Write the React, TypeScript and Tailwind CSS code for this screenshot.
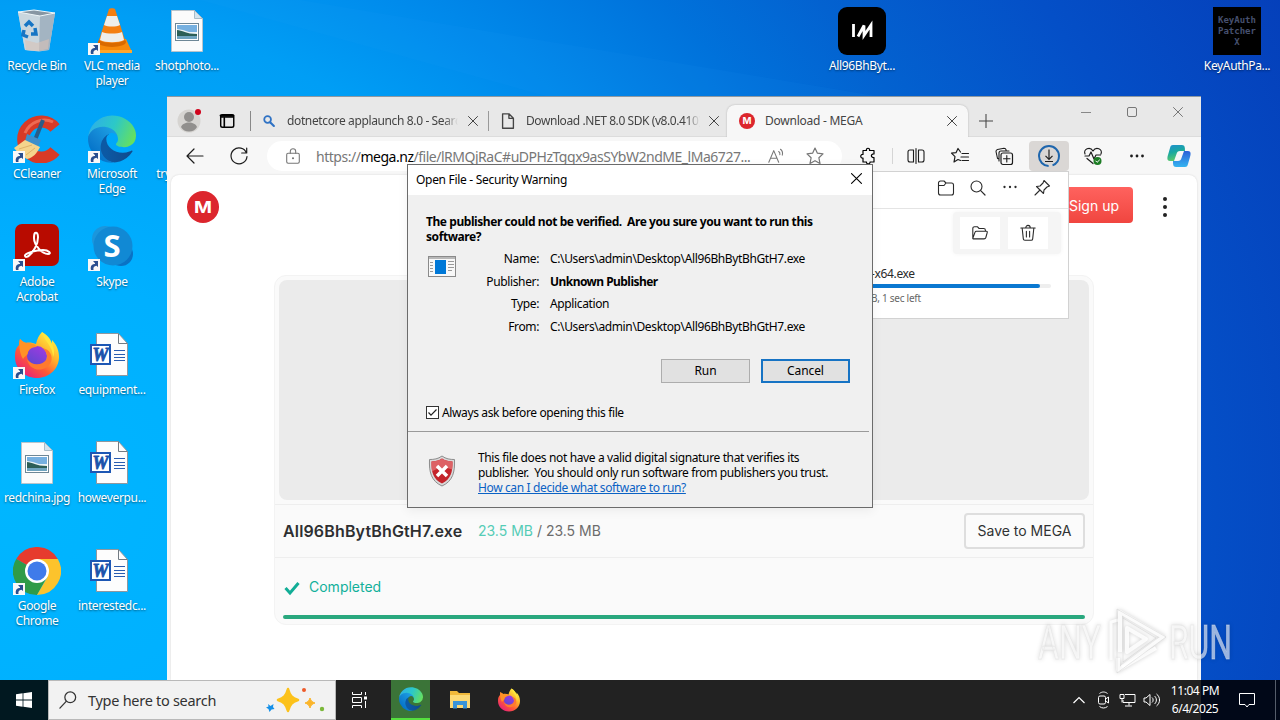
import type { ReactNode } from "react";

function ShortcutArrow() {
  return (
    <svg className="absolute left-0 bottom-0 w-3 h-3" viewBox="0 0 12 12">
      <rect width="12" height="12" fill="#f8f8f8" />
      <path d="M3 11c-1-4 1-6 4-6V2.500H10V8L8.500 6.800C6 7 5 8.500 5.500 11z" fill="#2a4f8f" />
      <path d="M5 2h5v5.500z" fill="#2a4f8f" />
    </svg>
  );
}

function EdgeLogo({ className, id }: { className: string; id: string }) {
  return (
    <svg className={className} viewBox="0 0 256 256">
      <defs>
        <linearGradient id={`${id}a`} x1="0.2" y1="0.5" x2="1" y2="0.5">
          <stop offset="0" stopColor="#0c59a4" />
          <stop offset="1" stopColor="#114a8b" />
        </linearGradient>
        <linearGradient id={`${id}b`} x1="0.8" y1="0.2" x2="0.2" y2="0.9">
          <stop offset="0" stopColor="#1b9de2" />
          <stop offset="0.6" stopColor="#1080d0" />
          <stop offset="1" stopColor="#0070c8" />
        </linearGradient>
        <linearGradient id={`${id}c`} x1="0" y1="0.3" x2="1" y2="0.6">
          <stop offset="0" stopColor="#2eaee8" />
          <stop offset="0.5" stopColor="#2cc8c8" />
          <stop offset="1" stopColor="#66e05e" />
        </linearGradient>
      </defs>
      <path
        fill={`url(#${id}a)`}
        d="M231 190.500c-3.400 1.800-6.900 3.300-10.500 4.700a101 101 0 0 1-35.500 6.400c-46.800 0-87.500-32.200-87.500-73.500a31.300 31.300 0 0 1 16.300-27.300c-42.300 1.800-53.200 45.900-53.200 71.700 0 73.200 67.400 80.600 82 80.600 7.800 0 19.600-2.300 26.700-4.500l1.300-.5a128 128 0 0 0 66.600-52.800 4 4 0 0 0-5.200-5.600z"
      />
      <path
        fill={`url(#${id}b)`}
        d="M105.700 241.400a79 79 0 0 1-22.700-21.300 80.700 80.700 0 0 1 29.500-120c3.200-1.500 8.500-4.100 15.600-4a32.400 32.400 0 0 1 25.700 13 31.900 31.900 0 0 1 6.300 18.700c0-.2 24.500-79.600-80-79.600-43.900 0-80 41.700-80 78.200 0 19.300 4.500 38.500 12.600 55.200a128 128 0 0 0 156.400 67 75.500 75.500 0 0 1-62.800-7.200z"
      />
      <path
        fill={`url(#${id}c)`}
        d="M152.300 149.900c-.8 1-3.300 2.500-3.300 5.700 0 2.600 1.700 5.100 4.700 7.200 14.400 10 41.500 8.700 41.600 8.700a59.600 59.600 0 0 0 30.300-8.300 61.400 61.400 0 0 0 30.400-52.900c.3-22.400-8-37.300-11.300-43.900C223.500 25.400 177.800 2 128 2A128 128 0 0 0 0 128.200c.5-36.500 36.800-66 80-66 3.500 0 23.500.3 42 10.100 16.300 8.600 24.900 18.900 30.800 29.200 6.200 10.700 7.300 24.100 7.300 29.500s-2.700 13.300-7.800 18.900z"
      />
    </svg>
  );
}

function FirefoxLogo({ className, id }: { className: string; id: string }) {
  return (
    <svg className={className} viewBox="0 0 48 48">
      <defs>
        <linearGradient id={`${id}a`} x1="0.85" y1="0.1" x2="0.2" y2="0.95">
          <stop offset="0" stopColor="#fff044" />
          <stop offset="0.35" stopColor="#ffb02a" />
          <stop offset="0.65" stopColor="#ff5a36" />
          <stop offset="1" stopColor="#e8207a" />
        </linearGradient>
        <linearGradient id={`${id}b`} x1="0.8" y1="0" x2="0.2" y2="1">
          <stop offset="0" stopColor="#a03ae0" />
          <stop offset="1" stopColor="#5b48d0" />
        </linearGradient>
      </defs>
      <path
        fill={`url(#${id}a)`}
        d="M29 1c5 3 8 7 9 12 1-1 1-2 1-4 5 5 7 11 7 17 0 12-10 21-22 21S2 38 2 26c0-6 1-9 4-12 0-2 0-4 1-6 2 2 4 3 6 4 3-1 7 0 10 1 1-5 3-9 6-12z"
      />
      <circle cx="24" cy="25" r="10" fill={`url(#${id}b)`} />
      <path d="M7 8c2 3 5 4 8 4 3 0 7 1 9 4-3 0-8 1-9 5 0 3-3 4-5 7-4-7-4-14-3-20z" fill="#ff9226" />
      <path d="M14 28c5 7 15 7 20 0 1-5-2-9-5-11 8 1 11 8 9 14-5 11-22 10-24-3z" fill="#ff7a2e" />
      <path d="M29 1c2 9 11 14 11 25 2-4 1-9-1-13-1-5-5-9-10-12z" fill="#ffe63c" />
    </svg>
  );
}

function RecycleBin() {
  return (
    <svg className="w-12 h-12" viewBox="0 0 48 48">
      <path d="M5 5l37 1-6 37-10 1.500L12 43z" fill="#c3d2dc" />
      <path d="M5 5l22 4-1 35-14-1z" fill="#c9d6de" />
      <path d="M27 9l15-3-6 37-10 1z" fill="#a3b4c2" />
      <path d="M5 5l16-2 21 3-15 3z" fill="#8796a3" stroke="#eef5f8" strokeWidth="1" />
      <path d="M12 33l12 3 12-4-1 10-10 2-12-1z" fill="#d9c2b5" opacity=".6" />
      <path d="M12 19l4-4 4 4M22 21l1 6-5 0M11 23l-1 5 5 2" fill="none" stroke="#1675c4" strokeWidth="3.500" />
    </svg>
  );
}

function VlcIcon() {
  return (
    <svg className="w-12 h-12" viewBox="0 0 48 48">
      <path d="M12 32h26l6 13H4z" fill="#f78a0c" />
      <path d="M4 43h40v3H4z" fill="#ffa62a" />
      <ellipse cx="24" cy="35" rx="14" ry="5" fill="#d96a00" />
      <path d="M21 2c1-1 5-1 6 0l10 31c-4 4-22 4-26 0z" fill="#f47f10" />
      <path d="M19 9h10l3 9c-4 2-12 2-16 0z" fill="#eeeeea" />
      <path d="M14 25c5 2 15 2 20 0l2 8c-5 3-19 3-24 0z" fill="#eeeeea" />
    </svg>
  );
}

function CCleanerIcon() {
  return (
    <svg className="w-12 h-12" viewBox="0 0 48 48">
      <path d="M42 13A18 18 0 1 0 42 36" fill="none" stroke="#d83a26" strokeWidth="12" />
      <path d="M40 7A21 21 0 0 0 12 18" fill="none" stroke="#ee6a52" strokeWidth="3" />
      <path d="M30 5l-8 20" stroke="#2b5c87" strokeWidth="4" />
      <path d="M14 19l14 6-3 7-13-6z" fill="#3d8fcb" />
      <path d="M12 25l15 7c-3 6-7 11-13 12C9 41 5 38 1 33z" fill="#f5d48c" />
      <path d="M6 34l13-4M13 40l9-7" stroke="#dfb269" />
    </svg>
  );
}

function AcrobatIcon() {
  return (
    <svg className="w-12 h-12" viewBox="0 0 48 48">
      <rect x="2" y="1" width="44" height="42" rx="7" fill="#b80b00" />
      <path
        d="M22 10c4-2 4 8 0 15-3 6-9 11-10 8s12-6 18-6 9 4 5 4c-6 0-14-9-14-16 0-2 0-4 1-5z"
        fill="none"
        stroke="#fff"
        strokeWidth="2"
      />
    </svg>
  );
}

function SkypeIcon() {
  return (
    <svg className="w-12 h-12" viewBox="0 0 48 48">
      <circle cx="17" cy="16" r="13" fill="#1b96dc" />
      <circle cx="33" cy="31" r="12" fill="#0a72c4" />
      <circle cx="25" cy="23" r="19.500" fill="#1189d4" />
      <text x="24" y="34" textAnchor="middle" fontFamily="Open Sans, sans-serif" fontWeight="700" fontSize="31" fill="#fff">
        S
      </text>
    </svg>
  );
}

function ChromeIcon() {
  return (
    <svg className="w-12 h-12" viewBox="0 0 48 48">
      <path d="M24 24L3.200 12A24 24 0 0 1 44.800 12z" fill="#e63b2e" />
      <path d="M3.200 12A24 24 0 0 0 24 48l10-18-10-6z" fill="#2f9b48" />
      <path d="M44.800 12A24 24 0 0 1 24 48l10.400-18L24 12z" fill="#fcc32c" />
      <circle cx="24" cy="24" r="12" fill="#fff" />
      <circle cx="24" cy="24" r="9.500" fill="#3f7bea" />
    </svg>
  );
}

function PhotoFile() {
  return (
    <svg className="w-12 h-12" viewBox="0 0 48 48">
      <path d="M8.500 3.500h23l8 8v33h-31z" fill="#fbfbfb" stroke="#b8c4cc" />
      <path d="M31.500 3.500v8h8z" fill="#d3e4ee" stroke="#a8bcc8" />
      <rect x="12.500" y="16.500" width="23" height="17" fill="#fff" stroke="#6e8796" />
      <rect x="14" y="18" width="20" height="7" fill="#76b0e0" />
      <path d="M14 22l6 1 6 2 8 0v3H14z" fill="#eaf3f6" />
      <path d="M14 23c5 0 9 4 20 4v3H14z" fill="#2c5f57" />
      <rect x="14" y="29" width="20" height="3" fill="#6fa4bf" />
    </svg>
  );
}

function WordFile() {
  return (
    <svg className="w-12 h-12" viewBox="0 0 48 48">
      <path d="M8.500 2.500h22l9 10v32h-31z" fill="#fdfdfd" stroke="#8f979e" />
      <path d="M30.500 2.500v10h9" fill="none" stroke="#737b82" />
      <path d="M26 19.500h11M26 23.500h11M26 26.500h11M26 29.500h11" stroke="#2a5db0" />
      <rect x="3" y="14" width="19" height="19" fill="#fff" stroke="#1d57b4" strokeWidth="2" />
      <text x="12.500" y="30" textAnchor="middle" fontFamily="Liberation Serif, serif" fontStyle="italic" fontWeight="700" fontSize="18" fill="#1b53ab" stroke="#1b53ab" strokeWidth=".8">
        W
      </text>
    </svg>
  );
}

function DesktopIcon({ label, shortcut, children }: { label: string; shortcut?: boolean; children: ReactNode }) {
  return (
    <div className="h-[108px] w-[74px] flex flex-col items-center pt-[7px]">
      <div className="relative w-12 h-12 shrink-0">
        {children}
        {shortcut && <ShortcutArrow />}
      </div>
      <span className="mt-[3px] text-center text-[12px] leading-[15px] tracking-[-0.350px] text-white whitespace-pre [text-shadow:0_1px_2px_rgba(0,0,0,.5)]">
        {label}
      </span>
    </div>
  );
}

function MegaLogo({ className }: { className: string }) {
  return (
    <svg className={className} viewBox="0 0 32 32">
      <circle cx="16" cy="16" r="16" fill="#dc262d" />
      <text x="16" y="22" textAnchor="middle" textLength="18" lengthAdjust="spacingAndGlyphs" fontFamily="Inter, sans-serif" fontWeight="700" fontSize="16.500" fill="#fff">
        M
      </text>
    </svg>
  );
}

function Icon({ children, className = "w-5 h-5" }: { children: ReactNode; className?: string }) {
  return (
    <svg
      className={`shrink-0 ${className}`}
      viewBox="0 0 20 20"
      fill="none"
      stroke="currentColor"
      strokeWidth="1.200"
      strokeLinecap="round"
      strokeLinejoin="round"
    >
      {children}
    </svg>
  );
}

function CloseIcon({ className }: { className: string }) {
  return (
    <Icon className={className}>
      <path d="M1 1l18 18M19 1L1 19" strokeWidth="2" />
    </Icon>
  );
}

function TabStrip() {
  return (
    <div className="h-10 flex bg-[#e8e8e8] text-[#444] border-b border-[#dcdcdc]">
      <div className="flex items-center h-full pt-2 pl-[10px]">
        <div className="relative w-6 h-6">
          <svg className="w-6 h-6" viewBox="0 0 24 24">
            <circle cx="12" cy="12" r="11.500" fill="#d6d4d1" />
            <circle cx="12" cy="8" r="5" fill="#918f8d" />
            <path d="M4 18c2-6 14-6 16 0-3 6-13 6-16 0z" fill="#918f8d" />
          </svg>
          <span className="absolute top-0 right-0 w-[6px] h-[6px] rounded-full bg-[#d0021b]" />
        </div>
        <Icon className="w-[18px] h-[18px] ml-[17px] text-black">
          <rect x="3" y="3" width="14.500" height="14" rx="2" strokeWidth="1.600" />
          <path d="M3.500 5.500h13.500M7 7v10" strokeWidth="1.800" />
          <path d="M3 4h14" strokeWidth="2.500" />
        </Icon>
        <span className="w-px h-5 bg-[#888] ml-[14px]" />
      </div>

      <div className="flex items-center w-[238px] pt-2 pl-[11px]">
        <Icon className="w-[14px] h-[14px] text-[#2f72c4]">
          <circle cx="8" cy="8" r="4.800" strokeWidth="2.500" />
          <path d="M12 12l5 5" strokeWidth="3" />
        </Icon>
        <span className="ml-[11px] w-[174px] overflow-hidden whitespace-nowrap text-[12px] tracking-[-0.370px] [mask-image:linear-gradient(to_right,#000_92%,transparent)]">
          dotnetcore applaunch 8.0 - Search
        </span>
        <CloseIcon className="w-[10px] h-[10px] ml-[10px]" />
        <span className="w-px h-5 bg-[#999] ml-[10px]" />
      </div>

      <div className="flex items-center w-[238px] pt-2 pl-[10px]">
        <Icon className="w-[18px] h-[18px]">
          <path d="M4 2h7l5 5v11H4zM11 2v5h5" strokeWidth="1.500" />
        </Icon>
        <span className="ml-[9px] w-[174px] overflow-hidden whitespace-nowrap text-[12px] tracking-[-0.420px] [mask-image:linear-gradient(to_right,#000_92%,transparent)]">
          Download .NET 8.0 SDK (v8.0.410)
        </span>
        <CloseIcon className="w-[10px] h-[10px] ml-[9px]" />
      </div>

      <div className="mt-2 h-8 w-[241px] shrink-0 flex items-center rounded-t-lg bg-[#f7f7f7] shadow-[0_0_2px_rgba(0,0,0,.25)] pl-[12px]">
        <MegaLogo className="w-4 h-4" />
        <span className="ml-[10px] w-[182px] text-[12px] tracking-[-0.250px]">Download - MEGA</span>
        <CloseIcon className="w-[10px] h-[10px]" />
      </div>
      <Icon className="w-[14px] h-[14px] mt-[17px] ml-[11px]">
        <path d="M10 0v20M0 10h20" strokeWidth="1.500" />
      </Icon>

      <div className="ml-auto mr-[18px] flex items-center gap-[36px] h-[30px] text-[#777]">
        <span className="w-[10px] h-px bg-[#888]" />
        <span className="w-[10px] h-[10px] border border-[#777] rounded-[2px]" />
        <CloseIcon className="w-[10px] h-[10px]" />
      </div>
    </div>
  );
}

function Toolbar() {
  const cell = "w-[44.200px] h-[30px] flex items-center justify-center";
  return (
    <div className="h-[38px] flex items-center bg-[#f7f7f7] text-[#1c1c1c] pl-[18px]">
      <Icon>
        <path d="M18 10H2.500M9 3L2 10l7 7" />
      </Icon>
      <Icon className="w-5 h-5 ml-[24px]">
        <path d="M17.500 7A8 8 0 1 0 18 10.500M17.700 2v5h-5" />
      </Icon>
      <div className="ml-[18px] w-[575px] h-[30px] shrink-0 flex items-center rounded-full bg-white text-[#777] pl-[17px]">
        <Icon className="w-[18px] h-[18px]">
          <rect x="3" y="7" width="14" height="11" rx="1.500" />
          <path d="M7 7V5c0-4 6-4 6 0v2" />
          <circle cx="10" cy="12.500" r=".6" fill="currentColor" />
        </Icon>
        <span className="ml-[14px] w-[445px] whitespace-nowrap text-[14px] tracking-[-0.480px]">
          https://<span className="text-black">mega.nz</span>/file/lRMQjRaC#uDPHzTgqx9asSYbW2ndME_lMa6727...
        </span>
        <Icon className="w-[18px] h-[18px] ml-[6px]">
          <path d="M2 17L7.500 4L13 17M4 12.500h7M13 5c1.500 1 1.500 2.500 1.300 3.500M15 2.500c2.500 2 2.500 4.500 2 6.500" />
        </Icon>
        <Icon className="w-5 h-5 ml-[20px]">
          <path d="M10 2l2.400 5.200 5.600.7-4.100 3.900 1.100 5.700-5-2.800-5 2.800 1.100-5.700L2 7.900l5.600-.7z" />
        </Icon>
      </div>
      <Icon className="w-5 h-5 ml-[16px] text-black">
        <path d="M5 4.500h3.500c-1-3 4-3 3 0H16V8c-3.500-.5-3.500 4 0 3.500V16h-4c.5 2.500-4 2.500-3.500 0H5v-4c-3 .5-3-4 0-3.500z" />
      </Icon>
      <span className="w-px h-4 bg-[#d5d5d5] ml-[14px] mr-[1px]" />
      <div className={cell}>
        <Icon>
          <path d="M7.500 4H4a2 2 0 0 0-2 2v8a2 2 0 0 0 2 2h3.500zM12.500 4H16a2 2 0 0 1 2 2v8a2 2 0 0 1-2 2h-3.500zM10 2.500v15" strokeWidth="1.100" />
        </Icon>
      </div>
      <div className={cell}>
        <Icon>
          <path d="M10.500 6L8 2.500 6 6.700l-4.500.5L5 10.700 4 16l4-2.500 2.500 1M12 7.500h6.500M11 11h7.500M12 14.500h6.500" />
        </Icon>
      </div>
      <div className={cell}>
        <Icon>
          <rect x="7" y="7" width="11.500" height="11.500" rx="2" />
          <path d="M12.800 9.500v6.500M9.500 12.800H16M5 13L3.500 12.500 2 5.500a2 2 0 0 1 1.500-2L10 2.200a2 2 0 0 1 2 1.500l.2 1.300M5 15V7a2 2 0 0 1 2-2h8" strokeWidth="1.100" />
        </Icon>
      </div>
      <div className="w-10 mx-[2px] h-[30px] flex items-center justify-center rounded bg-[#dad7d5]">
        <svg className="w-6 h-6" viewBox="0 0 24 24" fill="none">
          <circle cx="12" cy="12" r="10" stroke="#1f66ad" strokeWidth="2" strokeDasharray="59 4" strokeDashoffset="-16" />
          <path d="M12 5.500v9.500M8.500 11.800L12 15.300l3.500-3.500M8 17.500h8" stroke="#222" strokeWidth="1.200" />
        </svg>
      </div>
      <div className={cell}>
        <Icon>
          <path d="M2 8c-2-5 5-8 8-3 3-5 10-2 8 3M2 10h4l2-4 3 7 2-4h4.500M4 12.500l6 5" />
          <circle cx="14.500" cy="15" r="4" fill="#1c7c24" stroke="none" />
          <path d="M12.800 15l1.300 1.300L16.500 14" stroke="#fff" strokeWidth="1" />
        </Icon>
      </div>
      <div className={cell}>
        <Icon>
          <path d="M4.500 10h.01M10 10h.01M15.500 10h.01" strokeWidth="2.800" />
        </Icon>
      </div>
      <svg className="w-6 h-6 ml-[8px] shrink-0" viewBox="0 0 24 24">
        <defs>
          <linearGradient id="cpl" x1="0" y1="0" x2="0.300" y2="1">
            <stop offset="0" stopColor="#1f8fd0" />
            <stop offset=".5" stopColor="#1aa8a0" />
            <stop offset="1" stopColor="#5cc96a" />
          </linearGradient>
          <linearGradient id="cpr" x1="0.500" y1="0" x2="0.500" y2="1">
            <stop offset="0" stopColor="#2b60d8" />
            <stop offset="1" stopColor="#35b4f0" />
          </linearGradient>
        </defs>
        <path d="M6 1h9c3 0 3 3 3 6h-5c-2 0-3 1-3.500 3L7 17H3c-3 0-3-3-2-6l2-7c.5-2 1-3 3-3z" fill="url(#cpl)" />
        <path d="M18 23H9c-3 0-3-3-3-6h5c2 0 3-1 3.500-3L17 7h4c3 0 3 3 2 6l-2 7c-.5 2-1 3-3 3z" fill="url(#cpr)" />
      </svg>
    </div>
  );
}

function MegaPage() {
  return (
    <div className="mx-1 flex-1 rounded-t-lg bg-white shadow-[0_0_2px_rgba(0,0,0,.15)] font-[Inter,sans-serif]">
      <header className="flex items-center pt-3 pl-4 h-[52px]">
        <MegaLogo className="w-8 h-8" />
        <div className="ml-auto w-[96px] h-9 mt-[-4px] rounded flex items-center justify-end pr-[14px] bg-gradient-to-b from-[#ff625e] to-[#f0453f] text-white text-[14px]">
          Sign up
        </div>
        <div className="flex flex-col gap-[4px] ml-[30px] mr-[30px]">
          <span className="w-1 h-1 rounded-full bg-[#222]" />
          <span className="w-1 h-1 rounded-full bg-[#222]" />
          <span className="w-1 h-1 rounded-full bg-[#222]" />
        </div>
      </header>

      <section className="mt-[48px] ml-[103px] w-[820px] h-[350px] rounded-xl border border-[#f3f3f3] bg-[#fafafa]">
        <div className="ml-1 mr-1 mt-1 h-[220px] rounded-lg bg-[#ebebeb]" />
        <div className="mt-1 h-[54px] flex items-center border-y border-[#eeeeee] pl-2 pr-[8px] pb-px">
          <span className="w-[195px] text-[16px] tracking-[0.150px] font-semibold text-[#2e2f31]">All96BhBytBhGtH7.exe</span>
          <span className="text-[14px] text-[#6c6c6c] whitespace-pre">
            <span className="text-[#55ccb6]">23.5 MB</span> / 23.5 MB
          </span>
          <div className="ml-auto w-[121px] h-9 flex items-center justify-center rounded border-2 border-[#dedede] bg-[#fbfbfb] text-[14px] text-[#303233]">
            Save to MEGA
          </div>
        </div>
        <div className="h-[58px] flex items-center pl-[9px] pb-[2px] text-[14px] text-[#12b09a]">
          <svg className="w-4 h-4 mr-[9px] mt-[3px]" viewBox="0 0 16 16">
            <path d="M1.500 8L6 13 14.500 3" fill="none" stroke="#12ad96" strokeWidth="3" />
          </svg>
          Completed
        </div>
        <div className="ml-[8px] w-[802px] h-1 -mt-[1px] rounded-full bg-[#29a87e]" />
      </section>
    </div>
  );
}

function DownloadsFlyout() {
  return (
    <div className="absolute left-[540px] top-[74px] w-[362px] h-[148px] flex flex-col items-end bg-white border border-[#d2d2d2] text-[#2a2a2a]">
      <div className="w-full h-[37px] flex items-center justify-end gap-3 pr-[16px] pb-1 border-b border-[#e4e4e4]">
        <Icon>
          <path d="M2.500 5.500v9.500a2 2 0 0 0 2 2h11a2 2 0 0 0 2-2V7a2 2 0 0 0-2-2H10L8 3H4.500a2 2 0 0 0-2 2v2.500H8L10 5" strokeWidth="1.100" />
        </Icon>
        <Icon>
          <circle cx="8.500" cy="8.500" r="5.500" strokeWidth="1.100" />
          <path d="M12.700 12.700l4.300 4.300" />
        </Icon>
        <Icon>
          <path d="M4.500 9h.01M10 9h.01M15.500 9h.01" strokeWidth="2.300" />
        </Icon>
        <Icon>
          <path d="M12 2.500l5.500 5.500-2.500 1-3 3-.5 3.500-7-7 3.500-.5 3-3zM7.500 12.500L3 17" strokeWidth="1.100" />
        </Icon>
      </div>
      <div className="mt-[3px] mr-[7px] w-[108px] h-[42px] flex items-center gap-2 rounded bg-[#f5f5f5] pl-[7px] shadow-[0_0_5px_#f4f4f4]">
        <span className="w-10 h-8 flex items-center justify-center bg-white">
          <Icon className="w-[18px] h-[18px]">
            <path d="M2 16V5a2 2 0 0 1 2-2h3l2 2h5a2 2 0 0 1 2 2v1M2 16l2.500-7c.3-.7.500-1 1.500-1h11c1 0 1.200.7 1 1.500L16.500 15c-.3 1-1 1.500-2 1.500H3c-.7 0-1-.2-1-.5z" />
          </Icon>
        </span>
        <span className="w-10 h-8 flex items-center justify-center bg-white">
          <Icon className="w-[18px] h-[18px]">
            <path d="M2 4.500h16M7.500 4.500c0-4 5-4 5 0M3.500 4.500l1.300 12c.1 1 .7 1.500 1.700 1.500h7c1 0 1.600-.5 1.700-1.500l1.300-12M8.200 8v6.500M11.800 8v6.500" />
          </Icon>
        </span>
      </div>
      <div className="mr-[17px] mt-[12px] w-[180px] flex flex-col">
        <span className="text-[12px] leading-4 text-right pr-[137px] whitespace-nowrap tracking-[-0.350px]">-x64.exe</span>
        <div className="mt-[2px] h-1 rounded-full bg-[#eeeeee]">
          <div className="h-1 w-[169px] rounded-full bg-[#0a78d1]" />
        </div>
        <span className="mt-[2px] text-[10px] leading-4 text-[#666] whitespace-nowrap text-right pr-[132px] tracking-[-0.250px]">B, 1 sec left</span>
      </div>
    </div>
  );
}

function BrowserWindow() {
  return (
    <div className="absolute left-[167px] top-[96px] w-[1034px] h-[584px] flex flex-col bg-[#f7f7f7] border-t border-[#8e99a2] overflow-hidden">
      <TabStrip />
      <Toolbar />
      <MegaPage />
      <DownloadsFlyout />
    </div>
  );
}

const fileInfo = [
  { label: "Name:", value: "C:\\Users\\admin\\Desktop\\All96BhBytBhGtH7.exe" },
  { label: "Publisher:", value: "Unknown Publisher", bold: true },
  { label: "Type:", value: "Application" },
  { label: "From:", value: "C:\\Users\\admin\\Desktop\\All96BhBytBhGtH7.exe" },
];

function SecurityDialog() {
  return (
    <div className="absolute left-[407px] top-[164px] w-[466px] h-[344px] flex flex-col border border-[#6b6b6b] bg-[#f0f0f0] text-[12px] tracking-[-0.370px] text-black shadow-[0_3px_10px_rgba(0,0,0,.06)]">
      <div className="h-[30px] flex items-center justify-between bg-white pl-2 pr-[10px]">
        <span className="tracking-[-0.300px]">Open File - Security Warning</span>
        <CloseIcon className="w-[11px] h-[11px] mb-[3px]" />
      </div>
      <p className="mt-[19px] ml-[18px] font-bold leading-[15px] tracking-[-0.430px] whitespace-pre">
        {"The publisher could not be verified.  Are you sure you want to run this\nsoftware?"}
      </p>

      <div className="flex mt-1">
        <svg className="w-7 h-[22px] ml-5 mt-[8px] shrink-0" viewBox="0 0 28 22">
          <rect x=".5" y=".5" width="27" height="20" fill="#f8f8f8" stroke="#8a8a8a" />
          <path d="M1 2h26" stroke="#b8b8b8" strokeWidth="2" />
          <path d="M2 6.500h3M2 9.500h3M2 12.500h3M2 15.500h3M20 5.500h6M20 8.500h6M20 11.500h6M20 14.500h4" stroke="#999" />
          <rect x="7" y="4" width="11" height="14" fill="#0078d7" />
        </svg>
        <dl className="grid grid-cols-[83px_1fr] gap-x-[11px]">
          {fileInfo.map((row) => (
            <div key={row.label} className="contents">
              <dt className="h-[22.700px] leading-[22px] text-right">{row.label}</dt>
              <dd className={row.bold ? "h-[22.700px] leading-[22px] font-bold tracking-[-0.550px]" : "h-[22.700px] leading-[22px]"}>
                {row.value}
              </dd>
            </div>
          ))}
        </dl>
      </div>

      <div className="flex justify-end gap-[11px] mt-[20px] pr-[22px]">
        <button className="w-[89px] h-6 bg-[#e1e1e1] border border-[#adadad] tracking-[-0.100px]">Run</button>
        <button className="w-[89px] h-6 bg-[#e1e1e1] border-2 border-[#1673c4] tracking-[-0.100px]">Cancel</button>
      </div>

      <label className="flex items-center mt-[22px] ml-[18px] h-4">
        <svg className="w-[13px] h-[13px] mr-[3px]" viewBox="0 0 13 13">
          <rect x=".5" y=".5" width="12" height="12" fill="#fff" stroke="#333" />
          <path d="M2.500 6.500L5 9.200 10.500 3.500" fill="none" stroke="#222" strokeWidth="1.200" />
        </svg>
        Always ask before opening this file
      </label>
      <div className="mt-[10px] mr-[3px] h-px bg-[#9a9a9a]" />

      <div className="flex mt-[18px]">
        <svg className="w-[28px] h-8 ml-5 mt-[5px]" viewBox="0 0 28 32">
          <path d="M14 1c4 3 8 3.500 12.500 3.500C27 17 25 26 14 31 3 26 1 17 1.500 4.500 6 4.500 10 4 14 1z" fill="#d9d9d9" stroke="#8c8c8c" />
          <path d="M14 3.500c3.500 2.300 7 3 10.500 3C24.700 17 23 24 14 28.500 5 24 3.300 17 3.500 6.500c3.500 0 7-.7 10.500-3z" fill="#c4242b" />
          <path d="M14 3.500c3.500 2.300 7 3 10.500 3 0 3 0 5-.5 8-7-3-14-2-20 2-.5-3-.5-7-.5-10 3.500 0 7-.7 10.500-3z" fill="#dd6165" />
          <path d="M9 11l10 10M19 11L9 21" stroke="#fff" strokeWidth="3.500" />
        </svg>
        <div className="ml-[22px] leading-[15px] whitespace-pre">
          <p>This file does not have a valid digital signature that verifies its</p>
          <p>{"publisher.  You should only run software from publishers you trust."}</p>
          <p className="text-[#0b62c4] underline">How can I decide what software to run?</p>
        </div>
      </div>
    </div>
  );
}

function AnyRunMark() {
  return (
    <svg className="absolute left-[1034px] top-[604px] w-[204px] h-[72px] drop-shadow-[0_0_2px_rgba(0,0,0,.22)]" viewBox="0 0 204 72">
      <g fill="#fff" fillOpacity=".6" stroke="#ddd" strokeOpacity=".5" strokeWidth=".8" fontFamily="Roboto, sans-serif" fontSize="49">
        <text x="4" y="55" textLength="63" lengthAdjust="spacingAndGlyphs">ANY</text>
        <text x="135" y="55" textLength="63" lengthAdjust="spacingAndGlyphs">RUN</text>
      </g>
      <g fill="none" stroke="#fff" strokeOpacity=".85" strokeWidth="4" strokeLinejoin="round">
        <path d="M86 48V8l43 25-41 30" />
        <path d="M84 54v12l38-22M93 24l19 11-19 13z" />
        <path d="M84 16l-7 2v38" strokeWidth="3" />
      </g>
      <g fill="none" stroke="#cfcfcf" strokeOpacity=".6" strokeWidth=".8">
        <path d="M83 5l49 28-49 36z" />
        <path d="M89 14l33 20-33 24z" />
      </g>
    </svg>
  );
}

function Taskbar() {
  return (
    <div className="absolute left-0 bottom-0 w-full h-10 flex bg-[linear-gradient(to_right,#011820_48px,#222_48px,#222_1201px,#010818_1201px)] text-white">
      <div className="w-12 flex items-center justify-center">
        <svg className="w-4 h-4" viewBox="0 0 16 16" fill="#fff">
          <path d="M0 2.200L6.600 1.300V7.600H0zM7.400 1.200L16 0v7.600H7.400zM0 8.400h6.600v6.300L0 13.800zM7.400 8.400H16V16l-8.600-1.200z" />
        </svg>
      </div>
      <div className="w-[288px] flex items-center bg-[#f2f2f2] border border-[#b9b9b9] text-[#333] pl-[10px]">
        <Icon className="w-[18px] h-[18px]">
          <circle cx="12.500" cy="7" r="6" strokeWidth="1.400" />
          <path d="M8 11.500L1 19" strokeWidth="1.400" />
        </Icon>
        <span className="ml-[11px] w-[177px] pt-px text-[14.500px] tracking-[-0.280px]">Type here to search</span>
        <svg className="w-[60px] h-[28px]" viewBox="0 0 60 28">
          <path d="M23 3c2 7 4 9 10 11-6 2-8 4-10 11-2-7-4-9-10-11 6-2 8-4 10-11z" fill="#fcc21b" stroke="#fcc21b" strokeWidth="2.500" strokeLinejoin="round" />
          <path d="M45 12c1 3 2 4 5 5-3 1-4 2-5 5-1-3-2-4-5-5 3-1 4-2 5-5z" fill="#fbb52a" stroke="#fbb52a" strokeWidth="1" strokeLinejoin="round" />
          <path d="M3 18l2.500 2 3-2-.5 3 1.500 2-3 .5-2 2.500-1-3-2.500-1.500 2.500-1z" fill="#1590e8" />
          <circle cx="39" cy="4" r="2" fill="#ee5a2a" />
          <circle cx="57" cy="23" r="2.200" fill="#7bb83a" />
        </svg>
      </div>
      <div className="w-[55px] flex items-center pl-[15px]">
        <svg className="w-[17px] h-[16px]" viewBox="0 0 17 16" fill="none" stroke="#fff">
          <path d="M1.500 0v2.500h9V0M1.500 5.500h9v5h-9zM1.500 16v-2.500h9V16M14.500 0v3M14.500 9v7" />
          <path d="M13 4.500h3v3h-3z" fill="#fff" stroke="none" />
        </svg>
      </div>
      <div className="w-[39px] flex items-center justify-center bg-[#3b7438] border-b-2 border-[#55e03e]">
        <EdgeLogo className="w-6 h-6" id="tbEdge" />
      </div>
      <div className="w-[59px] flex items-center justify-center">
        <svg className="w-[22px] h-5" viewBox="0 0 22 20">
          <path d="M1 1h7l2 2h11v15H1z" fill="#f0b83a" />
          <path d="M1 5h20v13H1z" fill="#fcd975" />
          <path d="M4 18.500V11h14v7.500h-4V15H8v3.500z" fill="#3a94d8" />
        </svg>
      </div>
      <div className="w-[39px] flex items-center justify-center">
        <FirefoxLogo className="w-6 h-6" id="tbFox" />
      </div>

      <div className="ml-auto flex items-center">
        <svg className="w-[12px] h-[8px]" viewBox="0 0 12 8" fill="none" stroke="#fff" strokeWidth="1.200">
          <path d="M.5 7L6 1.500 11.500 7" />
        </svg>
        <svg className="w-[14px] h-[18px] ml-[12px]" viewBox="0 0 14 18" fill="none" stroke="#fff">
          <rect x="1.500" y="5" width="7" height="8" rx="1.500" />
          <path d="M8.500 8l3-2v6l-3-2M2.500 2.500C5 .5 8 .5 10.500 2.500M2.500 15.500c2.500 2 5.500 2 8 0" />
        </svg>
        <svg className="w-[17px] h-[14px] ml-[8px]" viewBox="0 0 17 14" fill="none" stroke="#fff">
          <path d="M6 1.500h10v8H4V7M1 1.500h4v4H1zM3 5.500v4M10 9.500v3M6 13h7" />
        </svg>
        <svg className="w-[17px] h-[14px] ml-[7px]" viewBox="0 0 17 14" fill="none" stroke="#fff">
          <path d="M1 5h2l4-3.500v11L3 9H1zM9 4.500c1.500 1 1.500 4 0 5M11.500 3c2.500 2 2.500 6 0 8M13.500 1c4 3 4 9 0 12" />
        </svg>
        <div className="w-[70px] text-center text-[12px] leading-[18px] tracking-[-0.450px]">
          <p>11:04 PM</p>
          <p>6/4/2025</p>
        </div>
        <svg className="w-[16px] h-[16px] ml-[9px] mr-[20px]" viewBox="0 0 16 16" fill="none" stroke="#fff">
          <path d="M.5 1.500h15v11H10L8 15l-2-2.500H.5z" />
        </svg>
        <span className="w-px h-10 bg-[#555d6a] mr-[4px]" />
      </div>
    </div>
  );
}

export default function App() {
  return (
    <div className="relative w-[1280px] h-[720px] overflow-hidden font-['Noto_Sans',sans-serif] bg-[radial-gradient(ellipse_1560px_1300px_at_0_500px,#00b6ff_0%,#00b0ff_18%,#009ef5_38%,#008bec_46%,#0072db_57%,#0362d0_65%,#044fc7_77%,#053db8_93%)]">
      {/* light beam of the wallpaper */}
      <svg className="absolute inset-0 w-full h-full" viewBox="0 0 1280 720">
        <path d="M200 0L560 100H900L300 0z" fill="#39b0ff" opacity=".06" />
      </svg>

      <div className="absolute left-0 top-0 flex">
        <div>
          <DesktopIcon label="Recycle Bin"><RecycleBin /></DesktopIcon>
          <DesktopIcon label="CCleaner" shortcut><CCleanerIcon /></DesktopIcon>
          <DesktopIcon label={"Adobe\nAcrobat"} shortcut><AcrobatIcon /></DesktopIcon>
          <DesktopIcon label="Firefox" shortcut><FirefoxLogo className="w-12 h-12" id="fox" /></DesktopIcon>
          <DesktopIcon label="redchina.jpg"><PhotoFile /></DesktopIcon>
          <DesktopIcon label={"Google\nChrome"} shortcut><ChromeIcon /></DesktopIcon>
        </div>
        <div className="ml-px">
          <DesktopIcon label={"VLC media\nplayer"} shortcut><VlcIcon /></DesktopIcon>
          <DesktopIcon label={"Microsoft\nEdge"} shortcut><EdgeLogo className="w-12 h-12" id="edge" /></DesktopIcon>
          <DesktopIcon label="Skype" shortcut><SkypeIcon /></DesktopIcon>
          <DesktopIcon label="equipment..."><WordFile /></DesktopIcon>
          <DesktopIcon label="howeverpu..."><WordFile /></DesktopIcon>
          <DesktopIcon label="interestedc..."><WordFile /></DesktopIcon>
        </div>
        <div className="ml-px">
          <DesktopIcon label="shotphoto..."><PhotoFile /></DesktopIcon>
          <DesktopIcon label="trymarket..."><PhotoFile /></DesktopIcon>
        </div>
      </div>

      <div className="absolute left-[825px] top-0">
        <DesktopIcon label="All96BhByt...">
          <svg className="w-12 h-12" viewBox="0 0 48 48">
            <rect width="48" height="48" rx="9" fill="#000" />
            <path d="M15.500 17v13M20 29.500L26 18.500V28.500L33 18V30" fill="none" stroke="#fff" strokeWidth="2.800" />
          </svg>
        </DesktopIcon>
      </div>
      <div className="absolute left-[1200px] top-0">
        <DesktopIcon label="KeyAuthPa...">
          <div className="w-12 h-12 bg-black flex flex-col items-center justify-center text-[#46506f] font-['DejaVu_Sans_Mono',monospace] font-bold text-[9px] leading-[11px] tracking-normal">
            <span>KeyAuth</span>
            <span>Patcher</span>
            <span>X</span>
          </div>
        </DesktopIcon>
      </div>

      <BrowserWindow />
      <SecurityDialog />
      <AnyRunMark />
      <Taskbar />
    </div>
  );
}
